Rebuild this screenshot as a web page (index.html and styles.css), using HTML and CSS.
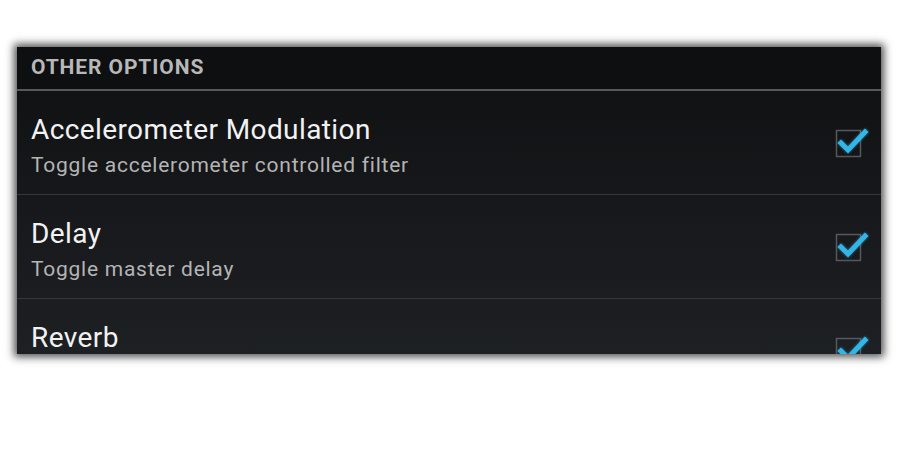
FILE: index.html
```html
<!DOCTYPE html>
<html>
<head>
<meta charset="utf-8">
<link rel="stylesheet" href="styles.css">
</head>
<body>
<div class="panel">
  <div class="header">OTHER OPTIONS</div>
  <div class="list">
    <div class="row">
      <div class="texts">
        <div class="title">Accelerometer Modulation</div>
        <div class="sub">Toggle accelerometer controlled filter</div>
      </div>
      <div class="check">
        <svg width="34" height="34" viewBox="0 0 34 34"><rect x="1.5" y="5.5" width="24" height="26" fill="none" stroke="#55585c" stroke-width="1.5"/><path class="mark" d="M6 18 L13 25 L30 7" fill="none" stroke="#33b5e5" stroke-width="5" stroke-linecap="square"/></svg>
      </div>
    </div>
    <div class="row">
      <div class="texts">
        <div class="title">Delay</div>
        <div class="sub">Toggle master delay</div>
      </div>
      <div class="check">
        <svg width="34" height="34" viewBox="0 0 34 34"><rect x="1.5" y="5.5" width="24" height="26" fill="none" stroke="#55585c" stroke-width="1.5"/><path class="mark" d="M6 18 L13 25 L30 7" fill="none" stroke="#33b5e5" stroke-width="5" stroke-linecap="square"/></svg>
      </div>
    </div>
    <div class="row">
      <div class="texts">
        <div class="title">Reverb</div>
      </div>
      <div class="check">
        <svg width="34" height="34" viewBox="0 0 34 34"><rect x="1.5" y="5.5" width="24" height="26" fill="none" stroke="#55585c" stroke-width="1.5"/><path class="mark" d="M6 18 L13 25 L30 7" fill="none" stroke="#33b5e5" stroke-width="5" stroke-linecap="square"/></svg>
      </div>
    </div>
  </div>
</div>
</body>
</html>
```
FILE: styles.css
```css
html, body {
  margin: 0;
  padding: 0;
  background: #ffffff;
  width: 899px;
  height: 473px;
  overflow: hidden;
  font-family: Roboto, "Liberation Sans", sans-serif;
}
.panel {
  margin: 47px 0 0 17px;
  width: 864px;
  height: 307px;
  overflow: hidden;
  background: #15171a;
  box-shadow: 0 0 8px 3px rgba(20, 21, 24, 0.75);
}
.header {
  box-sizing: border-box;
  height: 44px;
  padding: 8px 0 0 14px;
  background: #0e0f11;
  color: #b8b8b8;
  font-weight: bold;
  font-size: 21px;
  line-height: 24px;
  letter-spacing: 0.9px;
  border-bottom: 2px solid #56585a;
}
.list {
  background: linear-gradient(#111214, #1f2226 300px);
  height: 263px;
}
.row {
  display: flex;
  justify-content: space-between;
  height: 104px;
  box-sizing: border-box;
  border-bottom: 1px solid #34373b;
  padding: 23px 12px 0 14px;
}
.title {
  color: #f2f2f2;
  font-size: 28px;
  line-height: 32px;
  letter-spacing: 0.4px;
}
.sub {
  color: #b4b4b4;
  font-size: 21px;
  line-height: 30px;
  letter-spacing: 0.75px;
  margin-top: 4px;
}
.check {
  padding-top: 11px;
}
.check svg {
  display: block;
  overflow: visible;
}
.mark {
  filter: drop-shadow(0 0 1.5px rgba(51, 181, 229, 0.6));
}
```
